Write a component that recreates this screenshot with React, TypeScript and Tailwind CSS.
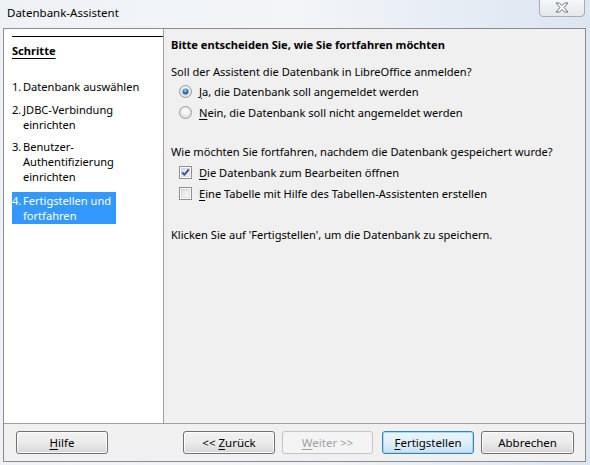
import React from "react";

const font = { fontFamily: '"Noto Sans", "Open Sans", sans-serif' };

function U({ c }: { c: string }) {
  return <span className="underline underline-offset-[2px]">{c}</span>;
}

function Radio({ checked }: { checked?: boolean }) {
  return (
    <svg width="13" height="13" viewBox="0 0 13 13" className="shrink-0">
      <defs>
        <radialGradient id={checked ? "rg1" : "rg2"} cx="50%" cy="40%" r="60%">
          <stop offset="0%" stopColor="#ffffff" />
          <stop offset="100%" stopColor="#dcdcdc" />
        </radialGradient>
        <radialGradient id="dot" cx="45%" cy="35%" r="60%">
          <stop offset="0%" stopColor="#9fd3f5" />
          <stop offset="60%" stopColor="#2f7fc0" />
          <stop offset="100%" stopColor="#1d4f86" />
        </radialGradient>
      </defs>
      <circle cx="6.5" cy="6.5" r="6" fill={`url(#${checked ? "rg1" : "rg2"})`} stroke="#9a9a9a" strokeWidth="1" />
      {checked && <circle cx="6.5" cy="6.5" r="3" fill="url(#dot)" />}
    </svg>
  );
}

function Check({ checked }: { checked?: boolean }) {
  return (
    <svg width="13" height="13" viewBox="0 0 13 13" className="shrink-0">
      <defs>
        <linearGradient id={checked ? "cb1" : "cb2"} x1="0" y1="0" x2="1" y2="1">
          <stop offset="0%" stopColor={checked ? "#cfdcec" : "#dedede"} />
          <stop offset="100%" stopColor={checked ? "#f4f8fc" : "#fbfbfb"} />
        </linearGradient>
      </defs>
      <rect x="0.5" y="0.5" width="12" height="12" fill="#ffffff" stroke="#8f8f8f" />
      <rect x="2.5" y="2.5" width="8" height="8" fill={`url(#${checked ? "cb1" : "cb2"})`} stroke="#c8c8c8" strokeWidth="0.6" />
      {checked && (
        <path d="M3.2 6.4 L5.4 8.9 L9.8 3.4" fill="none" stroke="#3b4f8f" strokeWidth="1.8" strokeLinejoin="round" />
      )}
    </svg>
  );
}

function Btn({
  children,
  w,
  disabled,
  focused,
}: {
  children: React.ReactNode;
  w: string;
  disabled?: boolean;
  focused?: boolean;
}) {
  return (
    <div
      className={`${w} h-[23px] flex items-center justify-center rounded-[3px] border text-[11.5px] ${
        disabled
          ? "border-[#c4c4c4] bg-[#f4f4f4] text-[#a0a0a0]"
          : focused
          ? "border-[#3c7fb1] bg-gradient-to-b from-[#eaf6fd] via-[#e0eef8] to-[#c8e2f4] text-black shadow-[inset_0_0_0_1px_#9fdcf8]"
          : "border-[#707070] bg-gradient-to-b from-[#f2f2f2] via-[#ebebeb] to-[#d6d6d6] text-black shadow-[inset_0_0_0_1px_#fcfcfc]"
      }`}
    >
      {children}
    </div>
  );
}

export default function App() {
  return (
    <div
      className="w-[590px] h-[465px] relative overflow-hidden bg-gradient-to-r from-[#eef2f7] via-[#f3f5f8] to-[#dbe6f1]"
      style={font}
    >
      {/* title bar */}
      <div className="h-[28px] flex items-center pl-[7px] pb-[2px] text-[11.5px] text-black">Datenbank-Assistent</div>
      <div className="absolute left-[539px] top-[-2px] w-[46px] h-[19px] rounded-b-[4px] border border-[#a9acb1] bg-gradient-to-b from-[#f6f8fa] to-[#e3e7ec] flex items-center justify-center">
        <svg width="14" height="11" viewBox="0 0 14 11">
          <path
            d="M1 1 H4.5 L7 3.6 L9.5 1 H13 L9 5.5 L13 10 H9.5 L7 7.4 L4.5 10 H1 L5 5.5 Z"
            fill="#ffffff"
            stroke="#6b6f75"
            strokeWidth="1"
            strokeLinejoin="round"
          />
        </svg>
      </div>

      {/* dialog */}
      <div className="ml-[3px] w-[583px] h-[434px] border border-[#8c8c8c] flex flex-col text-[11.1px] text-black">
        <div className="flex flex-1 min-h-0">
          {/* left steps */}
          <div className="w-[160px] bg-white border-r border-[#a0a0a0] pl-[8px] pt-[7px]">
            <div className="h-px bg-black" />
            <div className="mt-[6px] h-[16px] leading-[16px] font-bold underline underline-offset-[3px]">Schritte</div>
            <div className="mt-[20px] flex leading-[15px]">
              <span className="w-[11px]">1.</span>
              <span>Datenbank auswählen</span>
            </div>
            <div className="mt-[8px] flex leading-[15px]">
              <span className="w-[11px] shrink-0">2.</span>
              <span>
                JDBC-Verbindung
                <br />
                einrichten
              </span>
            </div>
            <div className="mt-[7px] flex leading-[15px]">
              <span className="w-[11px] shrink-0">3.</span>
              <span>
                Benutzer-
                <br />
                Authentifizierung
                <br />
                einrichten
              </span>
            </div>
            <div className="mt-[8px] w-[104px] flex leading-[15px] py-[1px] bg-[#3399ff] text-white whitespace-nowrap">
              <span className="w-[11px] shrink-0">4.</span>
              <span>
                Fertigstellen und
                <br />
                fortfahren
              </span>
            </div>
          </div>

          {/* right content */}
          <div className="flex-1 bg-[#f0f0f0] pl-[7px] pt-[8px] leading-[16px]">
            <div className="font-bold">Bitte entscheiden Sie, wie Sie fortfahren möchten</div>
            <div className="mt-[11px]">Soll der Assistent die Datenbank in LibreOffice anmelden?</div>
            <div className="mt-[1px] pl-[8px] h-[21px] flex items-center gap-[7px]">
              <Radio checked />
              <span>
                <U c="J" />a, die Datenbank soll angemeldet werden
              </span>
            </div>
            <div className="pl-[8px] h-[21px] flex items-center gap-[7px]">
              <Radio />
              <span>
                <U c="N" />ein, die Datenbank soll nicht angemeldet werden
              </span>
            </div>
            <div className="mt-[21px]">Wie möchten Sie fortfahren, nachdem die Datenbank gespeichert wurde?</div>
            <div className="mt-[2px] pl-[8px] h-[21px] flex items-center gap-[7px]">
              <Check checked />
              <span>
                <U c="D" />ie Datenbank zum Bearbeiten öffnen
              </span>
            </div>
            <div className="pl-[8px] h-[21px] flex items-center gap-[7px]">
              <Check />
              <span>
                <U c="E" />ine Tabelle mit Hilfe des Tabellen-Assistenten erstellen
              </span>
            </div>
            <div className="mt-[23px]">Klicken Sie auf 'Fertigstellen', um die Datenbank zu speichern.</div>
          </div>
        </div>

        {/* bottom buttons */}
        <div className="h-[38px] shrink-0 border-t border-[#a0a0a0] bg-[#f0f0f0] flex items-start pt-[7px] pl-[12px]">
          <Btn w="w-[92px]">
            <U c="H" />ilfe
          </Btn>
          <div className="ml-[75px] flex gap-[7px]">
            <Btn w="w-[92px]">
              &lt;&lt;&nbsp;<U c="Z" />urück
            </Btn>
            <Btn w="w-[91px]" disabled>
              <U c="W" />eiter &gt;&gt;
            </Btn>
            <div className="ml-[2px]">
              <Btn w="w-[92px]" focused>
                <U c="F" />ertigstellen
              </Btn>
            </div>
            <Btn w="w-[93px]">Abbrechen</Btn>
          </div>
        </div>
      </div>
    </div>
  );
}
